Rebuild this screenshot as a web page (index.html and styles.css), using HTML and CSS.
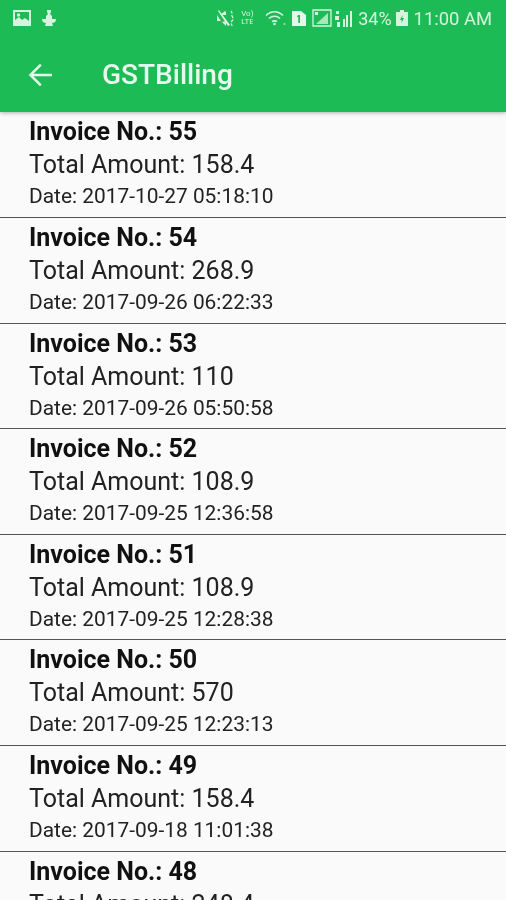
FILE: index.html
```html
<!DOCTYPE html>
<html lang="en">
<head>
<meta charset="utf-8">
<title>GSTBilling</title>
<link rel="stylesheet" href="styles.css">
</head>
<body>
<div class="screen">
  <header class="appbar">
    <div class="status">
      <div class="status-left">
        <svg class="ic" width="18" height="16" viewBox="0 0 18 16"><path fill="#d6f3df" fill-rule="evenodd" d="M0 0h18v16H0zM2 2v8l4-3 3 3 3-2 4 3V2z"/><circle cx="5.500" cy="5" r="1.700" fill="#d6f3df"/></svg>
        <svg class="ic" width="14" height="16" viewBox="0 0 14 16"><path fill="#d6f3df" d="M5 0h4v2l-1 2 2 2v3h4c0 3-2 4-4 4l1 3H3l1-3c-2 0-4-1-4-4h4V6l2-2-1-2z"/></svg>
      </div>
      <div class="status-right">
        <svg class="ic" width="18" height="17" viewBox="0 0 18 17"><path fill="#d6f3df" d="M0 5h3l5-4 1 1v3l-1 0zM0 5v6h3l1 0zM1 1l1-1 11 15-2 1z"/><path fill="#d6f3df" d="M5 12l4 4v-5z"/><path stroke="#d6f3df" stroke-width="1.300" fill="none" stroke-dasharray="3 1.500" d="M14 1c2 2 0 3 1 5s2 3 0 5 0 3 0 5"/></svg>
        <span class="volte">Vo)<br>LTE</span>
        <svg class="ic" width="21" height="16" viewBox="0 0 21 16"><g fill="none" stroke="#d6f3df" stroke-width="1.500"><path d="M1 5.500c5-5 12-5 17 0"/><path d="M4 8.500c3-3 8-3 11 0"/><path d="M7 11.500c2-1 3-1 5 0"/></g><circle cx="9.500" cy="14" r="1.300" fill="#d6f3df"/><circle cx="19.500" cy="14" r="1" fill="#a9e5bd"/></svg>
        <svg class="ic sim" width="14" height="15" viewBox="0 0 14 15"><path fill="#e4f7ea" d="M0 0h9l5 4v11H0z"/><path fill="#1dbb55" d="M6 4h2v8H6.300V6H5z"/></svg>
        <svg class="ic" width="20" height="18" viewBox="0 0 20 18"><path fill="none" stroke="#d6f3df" stroke-width="1.300" d="M1 1h18v16H1z"/><path fill="#a9e5bd" d="M4 15L16 4v11z"/><path fill="#d6f3df" d="M3 3h3v3H3z"/></svg>
        <svg class="ic tight" width="17" height="17" viewBox="0 0 17 17"><path fill="#d6f3df" d="M1 1h3v3H1zM0 6h4v4H0zM2 12h3v5H2zM8 9h2v8H8zM11 5h2v12h-2zM15 1h2v16h-2z"/></svg>
        <span class="pct">34%</span>
        <svg class="ic" width="12" height="16" viewBox="0 0 12 16"><path fill="#d6f3df" d="M4 0h4v2h4v14H0V2h4z"/><path fill="#1dbb55" d="M6.500 5L4 10h1.800L5.500 13 8 8H6.200z"/></svg>
        <span class="clock">11:00 AM</span>
      </div>
    </div>
    <div class="toolbar">
      <svg class="back" width="24" height="24" viewBox="0 0 24 24"><path fill="#e8f8ee" d="M24 10.700H5.400l8.300-8.300L12 .7 .7 12 12 23.300l1.700-1.700-8.300-8.300H24z"/></svg>
      <h1 class="title">GSTBilling</h1>
    </div>
  </header>
  <main class="list">
    <section class="row"><div class="inv">Invoice No.: 55</div><div class="amt">Total Amount: 158.4</div><div class="date">Date: 2017-10-27 05:18:10</div></section>
    <section class="row"><div class="inv">Invoice No.: 54</div><div class="amt">Total Amount: 268.9</div><div class="date">Date: 2017-09-26 06:22:33</div></section>
    <section class="row"><div class="inv">Invoice No.: 53</div><div class="amt">Total Amount: 110</div><div class="date">Date: 2017-09-26 05:50:58</div></section>
    <section class="row"><div class="inv">Invoice No.: 52</div><div class="amt">Total Amount: 108.9</div><div class="date">Date: 2017-09-25 12:36:58</div></section>
    <section class="row"><div class="inv">Invoice No.: 51</div><div class="amt">Total Amount: 108.9</div><div class="date">Date: 2017-09-25 12:28:38</div></section>
    <section class="row"><div class="inv">Invoice No.: 50</div><div class="amt">Total Amount: 570</div><div class="date">Date: 2017-09-25 12:23:13</div></section>
    <section class="row"><div class="inv">Invoice No.: 49</div><div class="amt">Total Amount: 158.4</div><div class="date">Date: 2017-09-18 11:01:38</div></section>
    <section class="row"><div class="inv">Invoice No.: 48</div><div class="amt">Total Amount: 248.4</div><div class="date">Date: 2017-09-18 10:52:10</div></section>
  </main>
</div>
</body>
</html>
```
FILE: styles.css
```css
html, body { margin: 0; padding: 0; height: 100%; overflow: hidden; }
body { font-family: Roboto, "Liberation Sans", sans-serif; background: #fafafa; color: #111; }
.screen { width: 506px; height: 900px; overflow: hidden; filter: blur(.35px); }
.appbar { height: 112.4px; background: #1dbb55; box-shadow: 0 1px 4px rgba(0,0,0,.3); position: relative; }
.status { height: 36px; display: flex; justify-content: space-between; align-items: center; padding: 0 14px 0 13px; color: #d6f3df; }
.status-left, .status-right { display: flex; align-items: center; }
.status-left { gap: 11px; }
.status-right { gap: 6px; }
.ic { display: block; flex: none; }
.volte { font-size: 8px; line-height: 8px; width: 12px; overflow: hidden; margin-right: 6px; }
.tight { margin-left: -3px; }
.pct { font-size: 18px; margin-right: -2px; }
.clock { font-size: 18.4px; }
.toolbar { height: 76px; display: flex; align-items: center; padding: 1px 0 0 28px; box-sizing: border-box; }
.back { flex: none; }
.title { margin: 0 0 0 50px; font-size: 28px; font-weight: 500; color: #e8f8ee; }
.list { display: block; }
.row { height: 105.6px; box-sizing: border-box; border-bottom: 1.5px solid #555; padding: 4px 0 0 29px; }
.inv { font-size: 25px; font-weight: 700; line-height: 32px; }
.amt { font-size: 25px; line-height: 34px; color: #222; }
.date { font-size: 20.9px; line-height: 28px; color: #222; }
```
